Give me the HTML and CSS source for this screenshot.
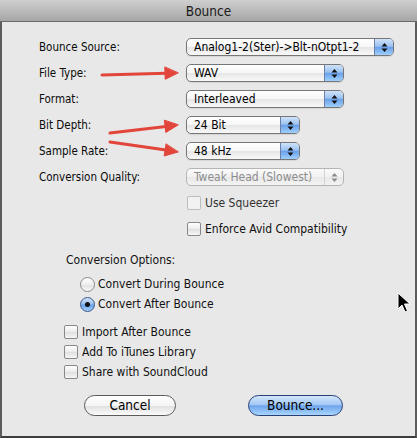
FILE: index.html
```html
<!doctype html>
<html>
<head>
<meta charset="utf-8">
<title>Bounce</title>
<link rel="stylesheet" href="styles.css">
</head>
<body>
<div class="window">
	<div class="titlebar">Bounce</div>
	<div class="content">
		<div class="form">
			<span class="label">Bounce Source:</span>
			<div class="popup w-source"><span class="popup-text">Analog1-2(Ster)-&gt;Blt-nOtpt1-2</span><span class="popup-cap"><svg width="7" height="11" viewBox="0 0 7 11"><path d="M0.5 4.5 L3.5 1 L6.5 4.5Z M0.5 6.5 L3.5 10 L6.5 6.5Z"/></svg></span></div>

			<span class="label">File Type:</span>
			<div class="popup w-mid"><span class="popup-text">WAV</span><span class="popup-cap"><svg width="7" height="11" viewBox="0 0 7 11"><path d="M0.5 4.5 L3.5 1 L6.5 4.5Z M0.5 6.5 L3.5 10 L6.5 6.5Z"/></svg></span></div>

			<span class="label">Format:</span>
			<div class="popup w-mid"><span class="popup-text">Interleaved</span><span class="popup-cap"><svg width="7" height="11" viewBox="0 0 7 11"><path d="M0.5 4.5 L3.5 1 L6.5 4.5Z M0.5 6.5 L3.5 10 L6.5 6.5Z"/></svg></span></div>

			<span class="label">Bit Depth:</span>
			<div class="popup w-small"><span class="popup-text">24 Bit</span><span class="popup-cap"><svg width="7" height="11" viewBox="0 0 7 11"><path d="M0.5 4.5 L3.5 1 L6.5 4.5Z M0.5 6.5 L3.5 10 L6.5 6.5Z"/></svg></span></div>

			<span class="label">Sample Rate:</span>
			<div class="popup w-small"><span class="popup-text">48 kHz</span><span class="popup-cap"><svg width="7" height="11" viewBox="0 0 7 11"><path d="M0.5 4.5 L3.5 1 L6.5 4.5Z M0.5 6.5 L3.5 10 L6.5 6.5Z"/></svg></span></div>

			<span class="label">Conversion Quality:</span>
			<div class="popup w-mid disabled"><span class="popup-text">Tweak Head (Slowest)</span><span class="popup-cap"><svg width="7" height="11" viewBox="0 0 7 11"><path d="M0.5 4.5 L3.5 1 L6.5 4.5Z M0.5 6.5 L3.5 10 L6.5 6.5Z"/></svg></span></div>

			<span></span>
			<div class="check disabled"><span class="box"></span>Use Squeezer</div>

			<span></span>
			<div class="check"><span class="box"></span>Enforce Avid Compatibility</div>
		</div>

		<div class="options">
			<div class="options-title">Conversion Options:</div>
			<div class="radios">
				<div class="radio-row"><span class="radio"></span>Convert During Bounce</div>
				<div class="radio-row"><span class="radio on"></span>Convert After Bounce</div>
			</div>
			<div class="checks">
				<div class="check"><span class="box"></span>Import After Bounce</div>
				<div class="check"><span class="box"></span>Add To iTunes Library</div>
				<div class="check"><span class="box"></span>Share with SoundCloud</div>
			</div>
		</div>

		<div class="buttons">
			<div class="btn cancel">Cancel</div>
			<div class="btn default">Bounce...</div>
		</div>
	</div>

	<!-- red annotation arrows drawn over the dialog -->
	<svg class="arrows" width="417" height="438" viewBox="0 0 417 438">
		<g stroke="#e2453a" stroke-width="3" stroke-linecap="round" fill="#e2453a">
			<line x1="102" y1="75" x2="166" y2="73.3"/>
			<polygon points="178,73 165.2,79.3 164.8,67.3" stroke-width="1" stroke-linejoin="round"/>
			<line x1="110" y1="133" x2="166" y2="126.5"/>
			<polygon points="178,125 165.8,132.5 164.4,120.5" stroke-width="1" stroke-linejoin="round"/>
			<line x1="110" y1="142" x2="166" y2="150.1"/>
			<polygon points="178,152 164.2,156 166,144.2" stroke-width="1" stroke-linejoin="round"/>
		</g>
	</svg>

	<svg class="cursor" width="14" height="22" viewBox="0 0 14 22">
		<path d="M1 1 L1 17 L5 13 L8 20 L10.5 19 L7.5 12 L13 12 Z" fill="#000" stroke="#fff" stroke-width="1" stroke-linejoin="round"/>
	</svg>
</div>
</body>
</html>
```

FILE: styles.css
```css
*{ margin:0; padding:0; box-sizing:border-box;}
html,body{ width:417px; height:438px; overflow:hidden; background:#3a3a3a;}
body{ font-family:"DejaVu Sans Condensed","DejaVu Sans",sans-serif; color:#111;}

.window{ position:relative; width:417px; height:438px; background:#e8e8e8; border-left:2px solid #5c5c5c; border-right:2px solid #5c5c5c; border-bottom:2px solid #3e3e3e;}

.titlebar{ height:22px; margin:0 -2px; line-height:22px; text-align:center; font-size:13.5px; color:#1a1a1a; background:linear-gradient(#cfcfcf,#a6a6a6); border-bottom:1px solid #6a6a6a;}

.content{ padding-top:12px;}

.form{ display:grid; grid-template-columns:147px auto; grid-auto-rows:26px; align-items:center; padding-left:37px;}
.label{ font-size:11.5px; color:#0a0a0a;}

.popup{ display:flex; height:18px; border:1px solid #767676; border-radius:5px; background:linear-gradient(#ffffff,#f6f6f6 50%,#e6e6e6 52%,#f8f8f8); font-size:12px; overflow:hidden; box-shadow:0 1px 1px rgba(0,0,0,0.08);}
.popup-text{ flex:1; padding-left:7px; line-height:16px; white-space:nowrap; color:#000;}
.popup-cap{ width:19px; display:flex; align-items:center; justify-content:center; border-left:1px solid #6a7fa8; background:linear-gradient(#cfe2f9,#9cc2f0 45%,#6aa0ea 52%,#9fd0fb);}
.popup-cap svg{ fill:#111;}
.w-source{ width:208px;}
.w-mid{ width:158px;}
.w-small{ width:114px;}

.popup.disabled{ border-color:#b4b4b4; background:linear-gradient(#fafafa,#f1f1f1 50%,#e9e9e9 52%,#f3f3f3); box-shadow:none;}
.popup.disabled .popup-text{ color:#8c8c8c;}
.popup.disabled .popup-cap{ background:none; border-left:1px solid #d2d2d2;}
.popup.disabled .popup-cap svg{ fill:#8c8c8c;}

.check{ display:flex; align-items:center; gap:4px; font-size:12px; height:20px; padding-left:1px;}
.box{ width:14px; height:14px; border:1px solid #888; border-radius:2px; background:linear-gradient(#ffffff,#ececec 50%,#e0e0e0 52%,#f6f6f6);}
.check.disabled{ color:#333;}
.check.disabled .box{ border-color:#bdbdbd; background:#f2f2f2;}

.options{ padding-left:62px; margin-top:10px; font-size:12px;}
.options-title{ height:16px; line-height:16px; padding-left:2px;}
.radios{ margin-top:6px; padding-left:16px;}
.radio-row{ display:flex; align-items:center; gap:3px; height:20px;}
.radio{ width:15px; height:15px; border:1px solid #8a8a8a; border-radius:50%; background:linear-gradient(#ffffff,#eeeeee 50%,#e2e2e2 52%,#f8f8f8); position:relative;}
.radio.on{ border-color:#3b5888; background:linear-gradient(#cfe2f9,#9cc2f0 45%,#6aa0ea 52%,#9fd0fb);}
.radio.on::after{ content:""; position:absolute; left:4px; top:4px; width:5px; height:5px; border-radius:50%; background:#111;}
.checks{ margin-top:8px;}
.checks .check{ padding-left:0;}

.buttons{ display:flex; gap:72px; margin-top:13px; padding-left:82px;}
.btn{ height:21px; line-height:19px; border-radius:11px; text-align:center; font-size:13.5px; color:#000;}
.btn.cancel{ width:92px; border:1px solid #5a5a5a; background:linear-gradient(#ffffff,#f4f4f4 50%,#e2e2e2 55%,#fbfbfb);}
.btn.default{ width:95px; border:1px solid #2a3f78; background:linear-gradient(#d4e7fb,#a2c8f3 45%,#6ea4ec 52%,#a8d6fc);}

.arrows{ position:absolute; left:-2px; top:0; pointer-events:none;}
.cursor{ position:absolute; left:395px; top:292px; pointer-events:none;}
```
